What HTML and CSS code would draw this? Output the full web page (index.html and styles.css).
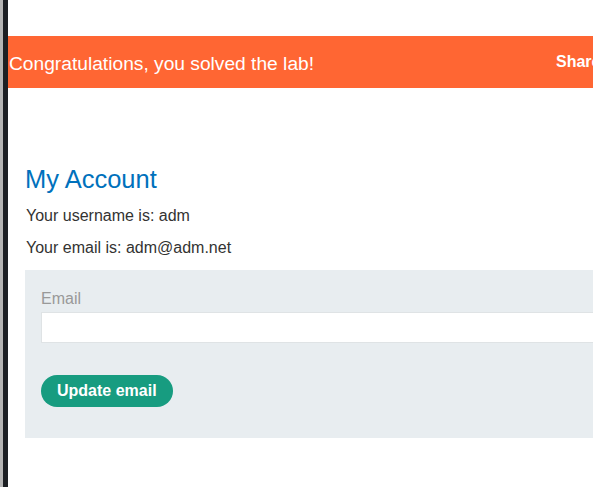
FILE: index.html
```html
<!DOCTYPE html>
<html lang="en">
<head>
<meta charset="utf-8">
<title>My Account</title>
<link rel="stylesheet" href="styles.css">
</head>
<body>
<div class="page">
  <div class="rail"><div class="rail-light"></div><div class="rail-dark"></div></div>
  <div class="main">
    <div class="banner">
      <span class="banner-title">Congratulations, you solved the lab!</span>
      <a class="banner-share" href="#">Share your skills!</a>
    </div>
    <div class="container">
      <h1 class="title">My Account</h1>
      <p class="info">Your username is: adm</p>
      <p class="info">Your email is: adm@adm.net</p>
      <form class="email-form">
        <label class="field-label" for="email">Email</label>
        <input class="field-input" id="email" type="email" name="email">
        <button class="btn" type="button">Update email</button>
      </form>
    </div>
  </div>
</div>
</body>
</html>
```
FILE: styles.css
```css
html, body {
  margin: 0;
  padding: 0;
  background: #ffffff;
  overflow: hidden;
}
body {
  font-family: "Liberation Sans", Arial, sans-serif;
  color: #333332;
  width: 593px;
  height: 487px;
}
.page {
  display: flex;
  height: 487px;
}
.rail {
  display: flex;
  flex: 0 0 8px;
}
.rail-light {
  width: 3px;
  background: #b4b4b4;
}
.rail-dark {
  width: 5px;
  background: #1c1f23;
}
.main {
  flex: 0 0 900px;
  padding-top: 36px;
  display: flex;
  flex-direction: column;
}
.banner {
  height: 52px;
  background: #ff6633;
  color: #ffffff;
  display: flex;
  align-items: center;
  padding-left: 1px;
}
.banner-title {
  flex: 0 0 547px;
  font-size: 19.2px;
  line-height: 24px;
  padding-top: 3px;
}
.banner-share {
  color: #ffffff;
  font-weight: bold;
  font-size: 16px;
  line-height: 20px;
  text-decoration: none;
  white-space: nowrap;
}
.container {
  padding: 76px 0 0 17px;
}
.title {
  margin: 0;
  font-size: 25.5px;
  line-height: 30px;
  font-weight: normal;
  color: #0071bc;
}
.info {
  margin: 12px 0 0;
  font-size: 16px;
  line-height: 20px;
  padding-left: 1px;
}
.email-form {
  margin-top: 12px;
  background: #e8edf0;
  padding: 19px 16px 31px;
  display: flex;
  flex-direction: column;
  align-items: flex-start;
}
.field-label {
  font-size: 16px;
  line-height: 20px;
  color: #999999;
}
.field-input {
  margin: 3px 0 0;
  box-sizing: border-box;
  width: 100%;
  height: 31px;
  border: 1px solid #dfe3e5;
  background: #ffffff;
  padding: 0 8px;
  font: inherit;
}
.btn {
  margin-top: 32px;
  height: 32px;
  padding: 0 16px;
  border: none;
  border-radius: 16px;
  background: #179c80;
  color: #ffffff;
  font-family: "Liberation Sans", Arial, sans-serif;
  font-weight: bold;
  font-size: 16px;
  line-height: 20px;
}
```
